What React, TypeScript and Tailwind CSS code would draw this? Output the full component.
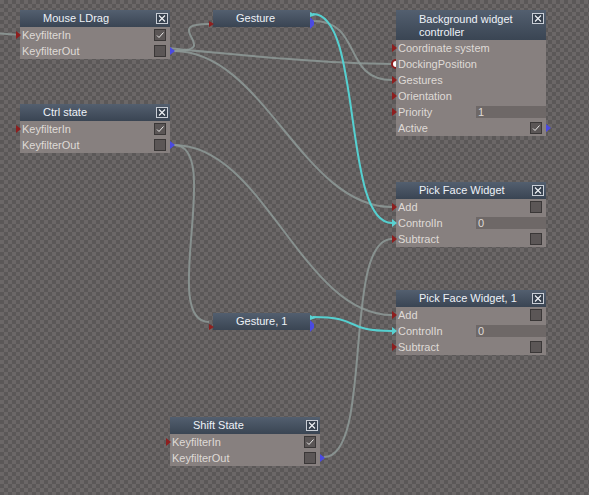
type Port = "red" | "cyan" | "dot";

type Row = {
  label: string;
  input?: Port;
  output?: boolean;
  check?: boolean;
  checked?: boolean;
  value?: string;
};

type NodeProps = {
  x: number;
  y: number;
  w?: number;
  title: string[];
  rows: Row[];
};

const wire = (x1: number, y1: number, x2: number, y2: number, d = 50) =>
  `M${x1} ${y1} C${x1 + d} ${y1} ${x2 - d} ${y2} ${x2} ${y2}`;

const greyWires = [
  wire(-70, 31, 392, 64, 120),
  wire(174, 51, 209, 24, 50),
  wire(313, 21, 392, 80, 50),
  wire(174, 51, 392, 207, 90),
  wire(174, 145, 209, 322, 50),
  wire(174, 145, 392, 315, 90),
  wire(324, 457, 392, 239, 50),
];

const cyanWires = [wire(313, 14, 392, 223, 50), wire(313, 317, 392, 331, 50)];

const Close = () => (
  <div className="absolute right-[2px] top-[3px] flex h-[11px] w-[12px] items-center justify-center border border-[#c9ced6] bg-[#36414f]">
    <svg width="8" height="7" viewBox="0 0 8 7">
      <path d="M1 0.5 L7 6.5 M7 0.5 L1 6.5" stroke="#f2f4f8" strokeWidth="1.1" />
    </svg>
  </div>
);

const Checkbox = ({ checked }: { checked?: boolean }) => (
  <div className="absolute right-[4px] top-[2px] h-[12px] w-[12px] border border-[#3a3737] bg-[#5b5656]">
    {checked && (
      <svg width="10" height="10" viewBox="0 0 10 10" className="absolute left-0 top-0">
        <path d="M2 5.5 L4 7.5 L8.5 2.5" stroke="#ecebea" strokeWidth="1" fill="none" />
      </svg>
    )}
  </div>
);

const InPort = ({ kind }: { kind: Port }) => {
  if (kind === "dot")
    return (
      <div className="absolute left-[-5px] top-[3px] h-[10px] w-[5px] overflow-hidden">
        <div className="h-[10px] w-[10px] rounded-full border-2 border-[#8e1d1d] bg-white" />
      </div>
    );
  return (
    <svg width="5" height="8" viewBox="0 0 5 8" className="absolute left-[-4px] top-[4px]">
      <polygon points="0,0 5,4 0,8" fill={kind === "cyan" ? "#5ad2d2" : "#8e1f1f"} />
    </svg>
  );
};

const OutPort = () => (
  <svg width="5" height="8" viewBox="0 0 5 8" className="absolute right-[-5px] top-[4px]">
    <polygon points="0,0 5,4 0,8" fill="#4a4ae2" />
  </svg>
);

const Node = ({ x, y, w = 150, title, rows }: NodeProps) => (
  <div className="absolute" style={{ left: x, top: y, width: w }}>
    <div
      className={`relative bg-gradient-to-b from-[#535f6f] to-[#3a4553] pl-[23px] text-[11px] text-[#eef2f8] ${
        title.length > 1 ? "h-[30px] pt-[3px] leading-[13px]" : "flex h-[17px] items-center"
      }`}
    >
      {title.map((t) => (
        <div key={t}>{t}</div>
      ))}
      <Close />
    </div>
    <div className="bg-[#87807f]">
      {rows.map((r) => (
        <div
          key={r.label}
          className="relative flex h-[16px] items-center pl-[2px] text-[11px] text-[#dfdad6]"
        >
          {r.input && <InPort kind={r.input} />}
          {r.label}
          {r.check && <Checkbox checked={r.checked} />}
          {r.value !== undefined && (
            <div className="absolute left-[80px] right-0 top-[2px] h-[12px] bg-[#6e6867] pl-[2px] text-[11px] leading-[12px] text-[#dfdad6]">
              {r.value}
            </div>
          )}
          {r.output && <OutPort />}
        </div>
      ))}
    </div>
  </div>
);

const GestureNode = ({ x, y, title }: { x: number; y: number; title: string }) => (
  <div
    className="absolute flex h-[17px] w-[97px] items-center bg-gradient-to-b from-[#535f6f] to-[#3a4553] pl-[23px] text-[11px] text-[#eef2f8]"
    style={{ left: x, top: y }}
  >
    {title}
    <svg width="5" height="6" viewBox="0 0 5 6" className="absolute left-[-4px] top-[11px]">
      <polygon points="0,0 5,3 0,6" fill="#8e1f1f" />
    </svg>
    <svg width="4" height="12" viewBox="0 0 4 12" className="absolute right-[-4px] top-[7px]">
      <polygon points="0,0 4,4 4,8 0,12" fill="#4a4ae2" />
    </svg>
    <svg width="6" height="5" viewBox="0 0 6 5" className="absolute right-[-6px] top-[2px]">
      <polygon points="0,0 6,3 0,5" fill="#5ad2d2" />
    </svg>
  </div>
);

const keyfilter: Row[] = [
  { label: "KeyfilterIn", input: "red", check: true, checked: true },
  { label: "KeyfilterOut", check: true, output: true },
];

const pickFace: Row[] = [
  { label: "Add", input: "red", check: true },
  { label: "ControlIn", input: "cyan", value: "0" },
  { label: "Subtract", input: "red", check: true },
];

export default function App() {
  return (
    <div className="relative h-[495px] w-[589px] overflow-hidden bg-[repeating-conic-gradient(#5b5858_0_25%,#6b6767_0_50%)] bg-[length:8px_8px] font-['Liberation_Sans',Arial,sans-serif]">
      <svg width="589" height="495" className="absolute left-0 top-0">
        {greyWires.map((d) => (
          <path key={d} d={d} stroke="#8e9a98" strokeOpacity="0.85" strokeWidth="2" fill="none" />
        ))}
        {cyanWires.map((d) => (
          <path key={d} d={d} stroke="#55d0d0" strokeWidth="2" fill="none" />
        ))}
      </svg>

      <Node x={20} y={10} title={["Mouse LDrag"]} rows={keyfilter} />
      <Node x={20} y={104} title={["Ctrl state"]} rows={keyfilter} />
      <Node x={170} y={417} title={["Shift State"]} rows={keyfilter} />

      <GestureNode x={213} y={10} title="Gesture" />
      <GestureNode x={213} y={313} title="Gesture, 1" />

      <Node
        x={396}
        y={10}
        title={["Background widget", "controller"]}
        rows={[
          { label: "Coordinate system", input: "red" },
          { label: "DockingPosition", input: "dot" },
          { label: "Gestures", input: "red" },
          { label: "Orientation", input: "red" },
          { label: "Priority", input: "red", value: "1" },
          { label: "Active", check: true, checked: true, output: true },
        ]}
      />
      <Node x={396} y={182} title={["Pick Face Widget"]} rows={pickFace} />
      <Node x={396} y={290} title={["Pick Face Widget, 1"]} rows={pickFace} />
    </div>
  );
}
